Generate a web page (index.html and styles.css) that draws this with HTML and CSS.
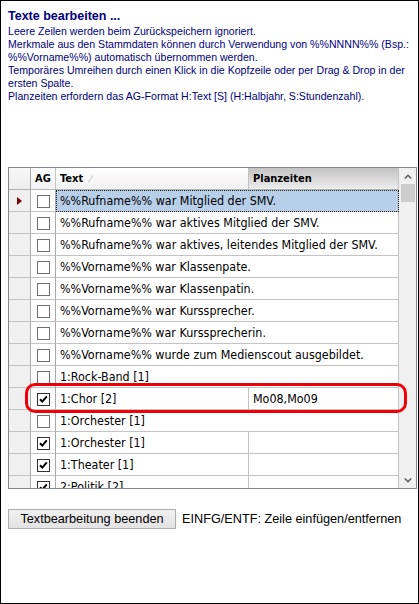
FILE: index.html
```html
<!DOCTYPE html>
<html lang="de">
<head>
<meta charset="utf-8">
<title>Texte bearbeiten</title>
<link rel="stylesheet" href="styles.css">
</head>
<body>
<div class="frame">
  <div class="intro">
    <div class="intro-title">Texte bearbeiten ...</div>
    <p class="intro-text">Leere Zeilen werden beim Zurückspeichern ignoriert.<br>Merkmale aus den Stammdaten können durch Verwendung von %%NNNN%% (Bsp.:<br>%%Vorname%%) automatisch übernommen werden.<br>Temporäres Umreihen durch einen Klick in die Kopfzeile oder per Drag &amp; Drop in der<br>ersten Spalte.<br>Planzeiten erfordern das AG-Format H:Text [S] (H:Halbjahr, S:Stundenzahl).</p>
  </div>

  <div class="grid">
    <div class="grid-body">
      <table class="texts">
        <colgroup>
          <col class="c-rowhead"><col class="c-ag"><col class="c-text"><col class="c-plan">
        </colgroup>
        <thead>
          <tr>
            <th class="rowhead"></th>
            <th class="hd">AG</th>
            <th class="hd">Text <svg class="sort" width="5" height="8" viewBox="0 0 5 8"><line x1="0.5" y1="7.5" x2="4.5" y2="0.5" stroke="#c4c4c4" stroke-width="1"/></svg></th>
            <th class="hd hd-hot">Planzeiten</th>
          </tr>
        </thead>
        <tbody>
          <tr>
            <th class="rowhead"><svg class="cur" width="5" height="8" viewBox="0 0 5 8"><path d="M0 0 L5 4 L0 8 Z" fill="#7a0000"/></svg></th>
            <td class="ag"><span class="cb"></span></td>
            <td class="txt sel" colspan="2">%%Rufname%% war Mitglied der SMV.</td>
          </tr>
          <tr>
            <th class="rowhead"></th>
            <td class="ag"><span class="cb"></span></td>
            <td class="txt" colspan="2">%%Rufname%% war aktives Mitglied der SMV.</td>
          </tr>
          <tr>
            <th class="rowhead"></th>
            <td class="ag"><span class="cb"></span></td>
            <td class="txt" colspan="2">%%Rufname%% war aktives, leitendes Mitglied der SMV.</td>
          </tr>
          <tr>
            <th class="rowhead"></th>
            <td class="ag"><span class="cb"></span></td>
            <td class="txt" colspan="2">%%Vorname%% war Klassenpate.</td>
          </tr>
          <tr>
            <th class="rowhead"></th>
            <td class="ag"><span class="cb"></span></td>
            <td class="txt" colspan="2">%%Vorname%% war Klassenpatin.</td>
          </tr>
          <tr>
            <th class="rowhead"></th>
            <td class="ag"><span class="cb"></span></td>
            <td class="txt" colspan="2">%%Vorname%% war Kurssprecher.</td>
          </tr>
          <tr>
            <th class="rowhead"></th>
            <td class="ag"><span class="cb"></span></td>
            <td class="txt" colspan="2">%%Vorname%% war Kurssprecherin.</td>
          </tr>
          <tr>
            <th class="rowhead"></th>
            <td class="ag"><span class="cb"></span></td>
            <td class="txt" colspan="2">%%Vorname%% wurde zum Medienscout ausgebildet.</td>
          </tr>
          <tr>
            <th class="rowhead"></th>
            <td class="ag"><span class="cb"></span></td>
            <td class="txt" colspan="2">1:Rock-Band [1]</td>
          </tr>
          <tr>
            <th class="rowhead"></th>
            <td class="ag"><span class="cb on"><svg width="11" height="11" viewBox="0 0 11 11"><path d="M2 5.2 L4.3 7.6 L8.8 2.4" fill="none" stroke="#000" stroke-width="2"/></svg></span></td>
            <td class="txt">1:Chor [2]</td>
            <td class="txt">Mo08,Mo09</td>
          </tr>
          <tr>
            <th class="rowhead"></th>
            <td class="ag"><span class="cb"></span></td>
            <td class="txt" colspan="2">1:Orchester [1]</td>
          </tr>
          <tr>
            <th class="rowhead"></th>
            <td class="ag"><span class="cb on"><svg width="11" height="11" viewBox="0 0 11 11"><path d="M2 5.2 L4.3 7.6 L8.8 2.4" fill="none" stroke="#000" stroke-width="2"/></svg></span></td>
            <td class="txt">1:Orchester [1]</td>
            <td class="txt"></td>
          </tr>
          <tr>
            <th class="rowhead"></th>
            <td class="ag"><span class="cb on"><svg width="11" height="11" viewBox="0 0 11 11"><path d="M2 5.2 L4.3 7.6 L8.8 2.4" fill="none" stroke="#000" stroke-width="2"/></svg></span></td>
            <td class="txt">1:Theater [1]</td>
            <td class="txt"></td>
          </tr>
          <tr>
            <th class="rowhead"></th>
            <td class="ag"><span class="cb on"><svg width="11" height="11" viewBox="0 0 11 11"><path d="M2 5.2 L4.3 7.6 L8.8 2.4" fill="none" stroke="#000" stroke-width="2"/></svg></span></td>
            <td class="txt">2:Politik [2]</td>
            <td class="txt"></td>
          </tr>
        </tbody>
      </table>
    </div>
    <div class="vscroll">
      <div class="vs-btn"><svg width="8" height="5" viewBox="0 0 8 5"><polyline points="0.8,4.5 4,1.3 7.2,4.5" fill="none" stroke="#606060" stroke-width="1.6"/></svg></div>
      <div class="vs-thumb"></div>
      <div class="vs-track"></div>
      <div class="vs-btn"><svg width="8" height="5" viewBox="0 0 8 5"><polyline points="0.8,0.5 4,3.7 7.2,0.5" fill="none" stroke="#606060" stroke-width="1.6"/></svg></div>
    </div>
    <div class="highlight"></div>
  </div>

  <div class="actions">
    <button class="btn" type="button">Textbearbeitung beenden</button>
    <span class="hint">EINFG/ENTF: Zeile einfügen/entfernen</span>
  </div>
</div>
</body>
</html>
```

FILE: styles.css
```css
* { box-sizing: border-box; }
html, body { margin: 0; padding: 0; background: #fff; }

.frame {
  width: 419px;
  height: 604px;
  border: 1px solid #000;
  padding: 7px 0 0 7px;
  overflow: hidden;
}

.intro {
  color: #000080;
  font-family: "Liberation Sans", Arial, sans-serif;
}
.intro-title {
  font-weight: bold;
  font-size: 12.5px;
  line-height: 16px;
  height: 16px;
}
.intro-text {
  margin: 1px 0 0;
  font-size: 10.6px;
  line-height: 13px;
  white-space: nowrap;
}

.grid {
  position: relative;
  margin-top: 64px;
  width: 409px;
  height: 322px;
  border: 1px solid #828790;
  display: flex;
}
.grid-body {
  width: 390px;
  height: 320px;
  overflow: hidden;
}

.texts {
  border-collapse: separate;
  border-spacing: 0;
  table-layout: fixed;
  width: 390px;
  font-family: "DejaVu Sans Condensed", "DejaVu Sans", Verdana, sans-serif;
  font-stretch: condensed;
  font-size: 12.4px;
  color: #000;
}
.c-rowhead { width: 22px; }
.c-ag { width: 25px; }
.c-text { width: 193px; }
.c-plan { width: 150px; }

.texts th, .texts td {
  height: 22px;
  padding: 0;
  border-right: 1px solid #c3c3c3;
  border-bottom: 1px solid #c3c3c3;
  white-space: nowrap;
  overflow: hidden;
  vertical-align: middle;
}
.texts thead th {
  text-align: left;
  font-size: 11px;
  font-weight: bold;
  padding-left: 4px;
  background: linear-gradient(#ffffff, #f2f2f2);
  border-bottom-color: #b5b5b5;
}
.texts thead th.hd-hot {
  background: linear-gradient(#c3c3c3, #d6d6d6 45%, #ececec);
}
.texts th.rowhead {
  background: #f0f0f0;
  border-right-color: #a9a9a9;
  padding: 0 0 0 8px;
  text-align: left;
}
.texts thead th.rowhead { background: linear-gradient(#f7f7f7, #eeeeee); padding: 0; }
.sort { margin-left: 1px; vertical-align: -1px; }
.cur { display: block; }

.texts td.ag {
  text-align: center;
  border-right-color: #a9a9a9;
}
.cb {
  display: inline-block;
  width: 13px;
  height: 13px;
  border: 1px solid #707070;
  background: #fff;
  vertical-align: middle;
  margin-top: -1px;
  position: relative;
}
.cb svg { display: block; }
.cb.on { border-color: #333; }

.texts td.txt { padding-left: 4px; }
.texts td.sel {
  background: #b8cfea;
  outline: 1px dotted #222;
  outline-offset: -1px;
}

.vscroll {
  width: 17px;
  background: #f0f0f0;
  display: flex;
  flex-direction: column;
}
.vs-btn {
  height: 16px;
  display: flex;
  align-items: center;
  justify-content: center;
}
.vs-thumb {
  height: 18px;
  margin: 0 1px 0 2px;
  background: #cdcdcd;
}
.vs-track { flex: 1; }

.highlight {
  position: absolute;
  left: 16px;
  top: 215px;
  width: 382px;
  height: 30px;
  border: 3px solid #ee0008;
  border-radius: 10px;
}

.actions {
  margin-top: 20px;
  display: flex;
  align-items: center;
  gap: 6px;
  font-family: "Liberation Sans", Arial, sans-serif;
  font-size: 12.7px;
}
.btn {
  width: 168px;
  height: 20px;
  padding: 0;
  margin: 0;
  border: 1px solid #adadad;
  background: linear-gradient(#f0f0f0, #e3e3e3);
  font-family: inherit;
  font-size: 12.7px;
  color: #000;
  line-height: 18px;
}
.hint { color: #000; }
```
